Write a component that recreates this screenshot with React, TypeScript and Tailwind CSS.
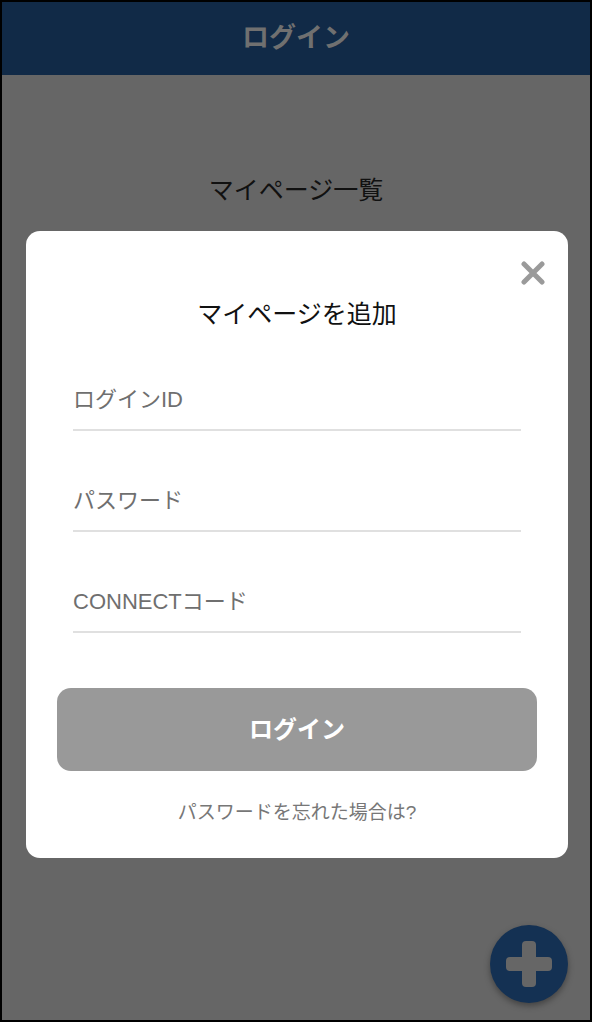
import React from "react";

const FONT = { fontFamily: '"Liberation Sans", "Noto Sans CJK JP", sans-serif' };

function Field({ label, first }: { label: string; first?: boolean }) {
  return (
    <div className={first ? "" : "mt-[55px]"}>
      <div className="h-[30px] leading-[30px] text-[22px] text-[#6f6f6f]">{label}</div>
      <div className="mt-[14px] h-[2px] bg-[#e0e0e0]" />
    </div>
  );
}

export default function App() {
  return (
    <div style={FONT} className="relative w-[592px] h-[1022px] border-2 border-black bg-[#666666] overflow-hidden">
      <div className="h-[73px] bg-[#112a47] flex items-center justify-center">
        <span className="text-[27px] font-bold text-[#707070]">ログイン</span>
      </div>
      <div className="flex justify-center pt-[99px]">
        <span className="text-[25px] leading-[32px] text-[#111111]">マイページ一覧</span>
      </div>

      <div className="absolute left-[24px] top-[229px] w-[542px] h-[627px] bg-white rounded-[14px]">
        <button className="absolute right-[23px] top-[30px] w-[24px] h-[24px] flex items-center justify-center">
          <svg width="24" height="24" viewBox="0 0 24 24">
            <path d="M3 3 L21 21 M21 3 L3 21" stroke="#9a9a9a" strokeWidth="5" strokeLinecap="round" />
          </svg>
        </button>
        <div className="pt-[67px] text-center text-[25px] leading-[32px] text-[#111111]">マイページを追加</div>
        <div className="px-[47px] mt-[55px]">
          <Field label="ログインID" first />
          <Field label="パスワード" />
          <Field label="CONNECTコード" />
        </div>
        <div className="px-[31px] mt-[55px]">
          <div className="h-[83px] rounded-[14px] bg-[#999999] flex items-center justify-center">
            <span className="text-[24px] font-bold text-white">ログイン</span>
          </div>
        </div>
        <div className="mt-[29px] text-center text-[19px] leading-[26px] text-[#777777]">パスワードを忘れた場合は?</div>
      </div>

      <div className="absolute left-[488px] top-[923px] w-[78px] h-[78px] rounded-full bg-[#143153] flex items-center justify-center shadow-[0_3px_6px_rgba(0,0,0,0.35)]">
        <svg width="46" height="46" viewBox="0 0 46 46">
          <rect x="16" y="0" width="14" height="46" rx="4" fill="#666666" />
          <rect x="0" y="16" width="46" height="14" rx="4" fill="#666666" />
        </svg>
      </div>
    </div>
  );
}
